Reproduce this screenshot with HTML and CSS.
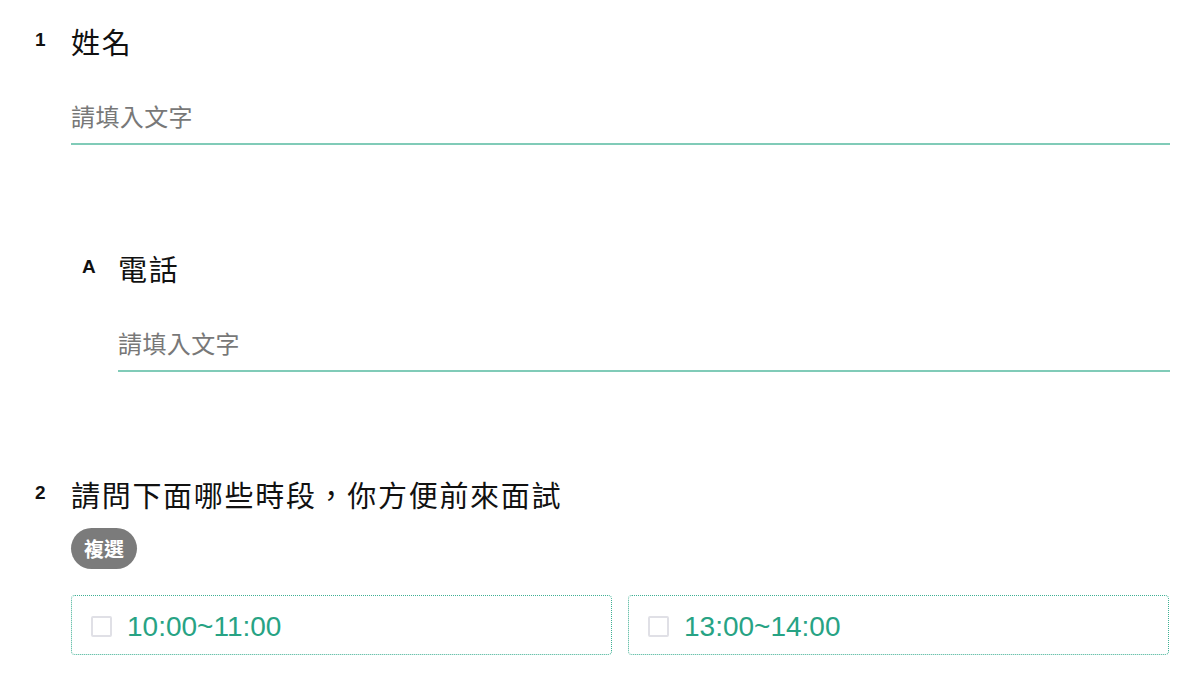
FILE: index.html
```html
<!DOCTYPE html>
<html lang="zh-Hant">
<head>
<meta charset="utf-8">
<link rel="stylesheet" href="styles.css">
</head>
<body>
<main class="form">
  <section class="q q1">
    <div class="q-head">
      <span class="num">1</span>
      <h2 class="title">姓名</h2>
    </div>
    <div class="q-body">
      <div class="field">請填入文字</div>
    </div>
  </section>

  <section class="q sub">
    <div class="q-head">
      <span class="num">A</span>
      <h2 class="title">電話</h2>
    </div>
    <div class="q-body">
      <div class="field">請填入文字</div>
    </div>
  </section>

  <section class="q q2">
    <div class="q-head">
      <span class="num">2</span>
      <h2 class="title">請問下面哪些時段，你方便前來面試</h2>
    </div>
    <div class="q-body">
      <span class="tag">複選</span>
      <div class="options">
        <label class="option"><span class="box"></span><span class="opt-text">10:00~11:00</span></label>
        <label class="option"><span class="box"></span><span class="opt-text">13:00~14:00</span></label>
      </div>
    </div>
  </section>
</main>
</body>
</html>
```

FILE: styles.css
```css
html, body {
  margin: 0;
  padding: 0;
  background: #ffffff;
}

body {
  font-family: "Noto Sans CJK TC", "Noto Sans", sans-serif;
  color: #111111;
}

.form {
  padding: 21px 34px 0 35px;
  display: flex;
  flex-direction: column;
}

.q-head {
  display: flex;
  align-items: center;
  height: 40px;
}

.num {
  width: 36px;
  flex: none;
  font-family: "Liberation Sans", Arial, sans-serif;
  font-weight: bold;
  font-size: 19px;
  line-height: 19px;
  margin-top: -4px;
  color: #111111;
}

.title {
  margin: 0;
  font-size: 29px;
  line-height: 40px;
  font-weight: normal;
  letter-spacing: 1.7px;
  color: #111111;
}

.q-body {
  padding-left: 36px;
}

.field {
  margin-top: 32px;
  padding: 8px 0 12px;
  font-size: 24px;
  line-height: 30px;
  letter-spacing: 0.4px;
  color: #787878;
  border-bottom: 2px solid #80cbb8;
}

.sub {
  margin-top: 103px;
  padding-left: 47px;
}

.q2 {
  margin-top: 102px;
}

.tag {
  display: inline-block;
  margin-top: 14px;
  height: 41px;
  line-height: 41px;
  padding: 0 13px;
  border-radius: 21px;
  background: #7b7b7b;
  color: #ffffff;
  font-weight: bold;
  font-size: 20px;
}

.options {
  margin-top: 26px;
  display: grid;
  grid-template-columns: 1fr 1fr;
  gap: 16px;
  margin-right: 1px;
}

.option {
  display: flex;
  align-items: center;
  height: 58px;
  padding-left: 19px;
  border: 1px dotted #3fb094;
  border-radius: 4px;
}

.box {
  width: 17px;
  height: 17px;
  border: 2px solid #e0e0e6;
  border-radius: 2px;
  flex: none;
  margin-right: 15px;
  margin-top: 2px;
}

.opt-text {
  font-family: "Liberation Sans", Arial, sans-serif;
  font-size: 28px;
  line-height: 32px;
  padding-top: 4px;
  color: #27a384;
}
```
